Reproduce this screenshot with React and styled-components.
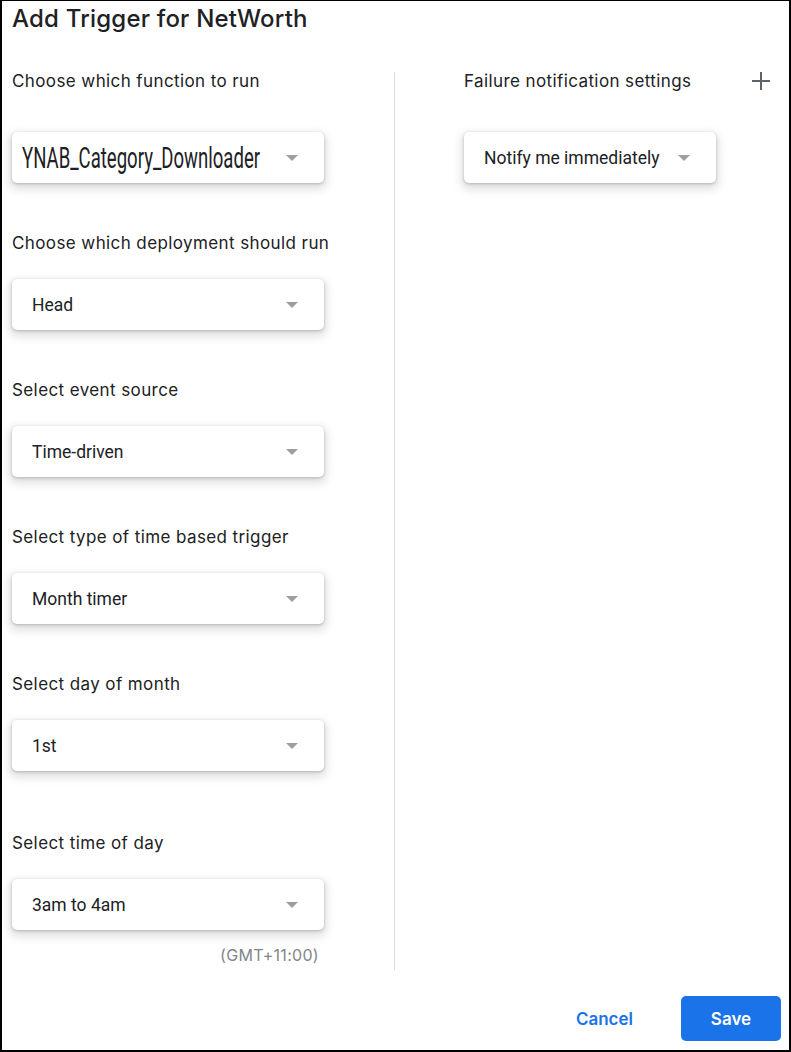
import React from 'react';
import styled, { createGlobalStyle } from 'styled-components';

const GlobalStyle = createGlobalStyle`
  html, body {
    margin: 0;
    padding: 0;
    background: #ffffff;
  }
  body {
    font-family: Roboto, "Liberation Sans", Arial, sans-serif;
    color: #202124;
  }
`;

const headingFont = 'Inter, "Open Sans", Roboto, sans-serif';

const StyledFrame = styled.div`
  box-sizing: border-box;
  width: 791px;
  height: 1052px;
  border: 2px solid #000;
  border-top-width: 1px;
  display: flex;
  flex-direction: column;
  background: #fff;
`;

const StyledTitle = styled.h1`
  margin: 0;
  height: 68px;
  padding: 3px 0 0 10px;
  box-sizing: border-box;
  font-size: 24px;
  line-height: 30px;
  font-weight: 500;
  letter-spacing: 0.2px;
  color: #202124;
  font-family: ${headingFont};
`;

const StyledBody = styled.div`
  display: grid;
  grid-template-columns: 392px 1px 1fr;
`;

const StyledColumn = styled.div`
  display: flex;
  flex-direction: column;
  padding-left: ${props => props.$inset}px;
  padding-right: ${props => props.$end || 0}px;
`;

const StyledDivider = styled.div`
  margin-top: 3px;
  height: 898px;
  background: #dadce0;
`;

const StyledLabelRow = styled.div`
  display: flex;
  align-items: center;
  justify-content: space-between;
  height: 24px;
  margin-top: ${props => props.$top}px;
`;

const StyledLabel = styled.span`
  font-family: ${headingFont};
  font-size: 17px;
  letter-spacing: 0.4px;
  color: #202124;
`;

const StyledSelect = styled.div`
  box-sizing: border-box;
  width: ${props => props.$width}px;
  height: 51px;
  margin-top: ${props => props.$top}px;
  padding: 0 26px 0 ${props => (props.$condensed ? 10 : 20)}px;
  display: flex;
  align-items: center;
  justify-content: space-between;
  border-radius: 5px;
  background: #fff;
  box-shadow: 0 1px 3px rgba(60, 64, 67, 0.3), 0 4px 8px 3px rgba(60, 64, 67, 0.15);
`;

const StyledValue = styled.span`
  font-family: Roboto, "Liberation Sans", sans-serif;
  font-size: 17.5px;
  color: #202124;
`;

const StyledCondensedValue = styled.span`
  display: inline-block;
  width: 237px;
  font-family: Roboto, "Liberation Sans", sans-serif;
  font-size: 29px;
  line-height: 34px;
  color: #202124;
  white-space: nowrap;
  transform: scaleX(0.64);
  transform-origin: left center;
`;

const StyledArrow = styled.span`
  flex: none;
  width: 0;
  height: 0;
  border-left: 6px solid transparent;
  border-right: 6px solid transparent;
  border-top: 6px solid #9e9e9e;
`;

const StyledNote = styled.div`
  width: 307px;
  margin-top: 15px;
  text-align: right;
  font-family: ${headingFont};
  font-size: 16px;
  letter-spacing: 0.3px;
  color: #80868b;
`;

const StyledPlus = styled.button`
  border: none;
  background: none;
  padding: 0;
  display: flex;
  color: #5f6368;
  cursor: pointer;
`;

const StyledFooter = styled.div`
  margin-top: auto;
  padding: 0 8px 9px 0;
  display: flex;
  justify-content: flex-end;
  align-items: center;
`;

const StyledButton = styled.button`
  height: 45px;
  border: none;
  border-radius: 5px;
  font-family: ${headingFont};
  font-size: 17px;
  font-weight: 600;
  cursor: pointer;
  padding: 0 ${props => (props.$primary ? 0 : 24)}px;
  margin-left: ${props => (props.$primary ? 24 : 0)}px;
  width: ${props => (props.$primary ? '100px' : 'auto')};
  background: ${props => (props.$primary ? '#1a73e8' : 'transparent')};
  color: ${props => (props.$primary ? '#fff' : '#1a73e8')};
`;

const fields = [
  { label: 'Choose which function to run', value: 'YNAB_Category_Downloader', gap: 39, condensed: true },
  { label: 'Choose which deployment should run', value: 'Head' },
  { label: 'Select event source', value: 'Time-driven' },
  { label: 'Select type of time based trigger', value: 'Month timer' },
  { label: 'Select day of month', value: '1st' },
  { label: 'Select time of day', value: '3am to 4am', extra: 12 },
];

const Select = ({ value, width, top, condensed }) => (
  <StyledSelect $width={width} $top={top} $condensed={condensed}>
    {condensed ? (
      <StyledCondensedValue>{value}</StyledCondensedValue>
    ) : (
      <StyledValue>{value}</StyledValue>
    )}
    <StyledArrow />
  </StyledSelect>
);

const App = () => (
  <>
    <GlobalStyle />
    <StyledFrame>
      <StyledTitle>Add Trigger for NetWorth</StyledTitle>
      <StyledBody>
        <StyledColumn $inset={10}>
          {fields.map((field, i) => (
            <React.Fragment key={field.label}>
              <StyledLabelRow $top={i === 0 ? 0 : 48 + (field.extra || 0)}>
                <StyledLabel>{field.label}</StyledLabel>
              </StyledLabelRow>
              <Select
                value={field.value}
                width={312}
                top={field.gap || 24}
                condensed={field.condensed}
              />
            </React.Fragment>
          ))}
          <StyledNote>(GMT+11:00)</StyledNote>
        </StyledColumn>
        <StyledDivider />
        <StyledColumn $inset={69} $end={18}>
          <StyledLabelRow $top={0}>
            <StyledLabel>Failure notification settings</StyledLabel>
            <StyledPlus aria-label="Add notification">
              <svg width="20" height="20" viewBox="0 0 20 20">
                <path d="M10 1v18M1 10h18" stroke="currentColor" strokeWidth="2" />
              </svg>
            </StyledPlus>
          </StyledLabelRow>
          <Select value="Notify me immediately" width={252} top={39} />
        </StyledColumn>
      </StyledBody>
      <StyledFooter>
        <StyledButton>Cancel</StyledButton>
        <StyledButton $primary>Save</StyledButton>
      </StyledFooter>
    </StyledFrame>
  </>
);

export default App;
